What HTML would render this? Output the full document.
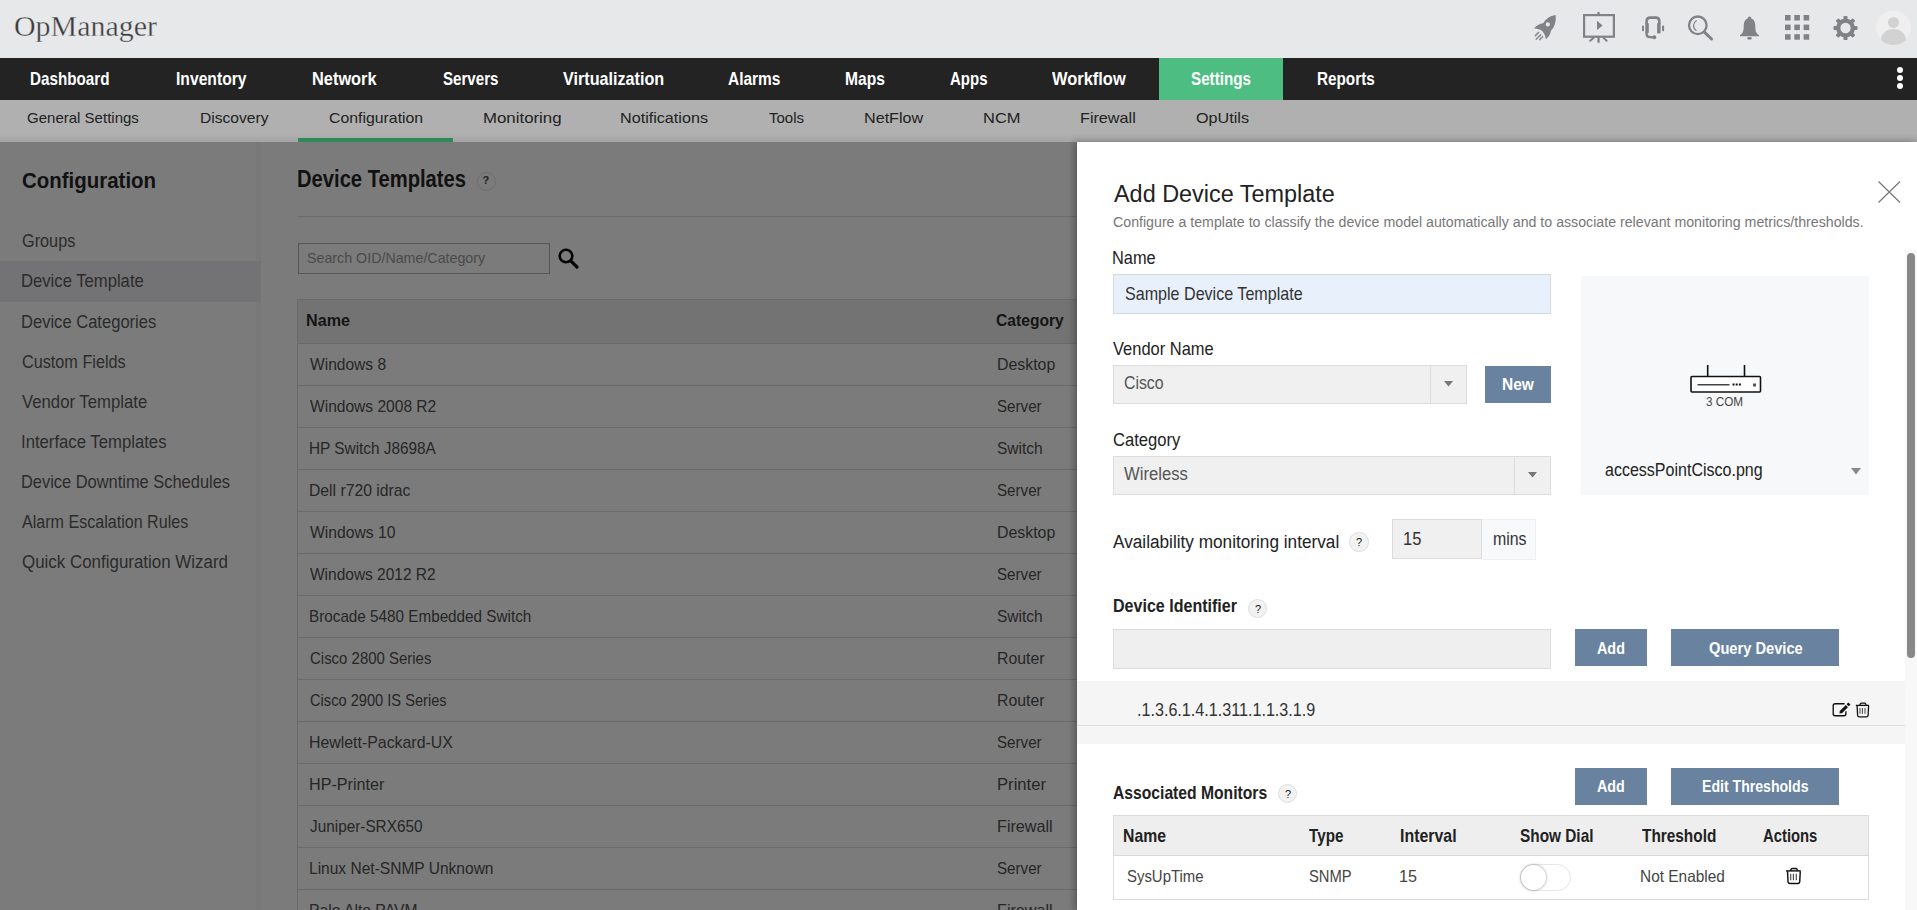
<!DOCTYPE html>
<html><head><meta charset="utf-8"><title>OpManager</title>
<style>
html,body{margin:0;padding:0}
body{width:1917px;height:910px;overflow:hidden;position:relative;background:#7b7b7b;font-family:"Liberation Sans",sans-serif}
.a{position:absolute;box-sizing:border-box}
.t{position:absolute;white-space:nowrap}
svg{position:absolute;overflow:visible}
</style></head><body>
<!-- header -->
<div class="a" style="left:0;top:0;width:1917px;height:58px;background:#e7e8ea"></div>
<div class="a" style="left:0;top:58px;width:1917px;height:42px;background:#232323"></div>
<div class="a" style="left:1159px;top:58px;width:124px;height:42px;background:#4dbd81"></div>
<div class="a" style="left:1896.5px;top:66.8px;width:6px;height:6px;border-radius:50%;background:#fff"></div>
<div class="a" style="left:1896.5px;top:74.9px;width:6px;height:6px;border-radius:50%;background:#fff"></div>
<div class="a" style="left:1896.5px;top:82.9px;width:6px;height:6px;border-radius:50%;background:#fff"></div>
<div class="a" style="left:0;top:100px;width:1917px;height:42px;background:linear-gradient(#b0b0b0 0,#b0b0b0 34px,#a4a4a4 42px)"></div>
<div class="a" style="left:298px;top:138px;width:155px;height:4px;background:#2f8a5a"></div>

<!-- header icons -->
<svg style="left:1528px;top:10px" width="34" height="34" viewBox="0 0 34 34">
  <g fill="#808285">
    <path d="M27.6 5.1 C22 5.8 17.8 9.2 15.2 13.2 C11.5 13.6 8.2 15.6 6.1 18.6 C9.5 18.6 12.6 19.6 14.6 21.4 C16.4 23.4 17.6 26.2 17.8 29.3 C20.6 27.3 22.6 24.2 23 20.6 C26.4 17.6 28.3 12.2 27.6 5.1 Z"/>
  </g>
  <circle cx="19.8" cy="14.4" r="2.1" fill="#e7e8ea"/>
  <g stroke="#808285" stroke-width="1.5" stroke-linecap="round" opacity="0.9">
    <path d="M7.4 25.6 L10.6 22.4 M8.2 29.3 L12.6 24.9 M11.8 29.6 L14.6 26.8"/>
  </g>
</svg>
<svg style="left:1583px;top:12px" width="33" height="32" viewBox="0 0 33 32">
  <rect x="1.1" y="3.1" width="29.8" height="21.6" fill="none" stroke="#808285" stroke-width="2.2"/>
  <g fill="#808285">
    <rect x="14.4" y="0" width="2.3" height="3"/>
    <rect x="14.4" y="25" width="2.3" height="5.7"/>
    <path d="M14 8.7 L19.6 13.4 L14 18.1 Z"/>
  </g>
  <g stroke="#808285" stroke-width="2" stroke-linecap="round"><path d="M10.4 25.9 L7.2 28.8 M20.6 25.9 L23.6 28.8"/></g>
</svg>
<svg style="left:1642px;top:16px" width="23" height="24" viewBox="0 0 23 24">
  <g fill="none" stroke="#808285" stroke-width="2.6">
    <path d="M4.6 8 L4.6 5.2 Q4.6 1.6 8.2 1.6 L13.8 1.6 Q17.3 1.6 17.3 5.2 L17.3 8"/>
    <path d="M4.6 16 L4.6 18 Q4.6 21 8 21.1 L12 21.3" stroke-width="2.4"/>
  </g>
  <g fill="#808285">
    <rect x="3.3" y="6.9" width="3.5" height="10.4" rx="1"/>
    <rect x="15.1" y="6.9" width="3.5" height="10.6" rx="1"/>
    <rect x="0" y="9.4" width="1.9" height="5.9" rx="0.8"/>
    <rect x="20" y="9.4" width="2.1" height="5.9" rx="0.8"/>
    <circle cx="12.3" cy="21.3" r="2"/>
  </g>
</svg>
<svg style="left:1688px;top:16px" width="26" height="26" viewBox="0 0 26 26">
  <g fill="none" stroke="#808285" stroke-linecap="round">
    <circle cx="9.8" cy="9.3" r="8.8" stroke-width="2.3"/>
    <path d="M16.6 16.4 L23.6 23" stroke-width="3"/>
    <path d="M8.4 4.8 C5 6.6 4.3 11.6 8.2 14.4" stroke-width="1.2"/>
  </g>
</svg>
<svg style="left:1739px;top:16px" width="21" height="25" viewBox="0 0 21 25">
  <g fill="#808285">
    <path d="M10.5 0.5 C11.8 0.5 12.3 1.5 12.3 2.6 C15.2 3.6 16.3 6.5 16.3 10 C16.3 15 17 17.5 20 19 L20 20.2 L1 20.2 L1 19 C4 17.5 4.7 15 4.7 10 C4.7 6.5 5.8 3.6 8.7 2.6 C8.7 1.5 9.2 0.5 10.5 0.5 Z"/>
    <ellipse cx="10.5" cy="22.3" rx="2.4" ry="1.4"/>
  </g>
</svg>
<svg style="left:1785px;top:15px" width="25" height="25" viewBox="0 0 25 25"><g fill="#808285"><rect x="0" y="0" width="5.6" height="5.5"/><rect x="9.3" y="0" width="5.6" height="5.5"/><rect x="18.6" y="0" width="5.6" height="5.5"/><rect x="0" y="9.6" width="5.6" height="5.5"/><rect x="9.3" y="9.6" width="5.6" height="5.5"/><rect x="18.6" y="9.6" width="5.6" height="5.5"/><rect x="0" y="19.2" width="5.6" height="5.5"/><rect x="9.3" y="19.2" width="5.6" height="5.5"/><rect x="18.6" y="19.2" width="5.6" height="5.5"/></g></svg>
<svg style="left:1833px;top:16px" width="25" height="24" viewBox="0 0 25 24"><g fill="#808285"><rect x="10.5" y="0" width="4" height="6" rx="0.8" transform="rotate(0 12.5 12)"/><rect x="10.5" y="0" width="4" height="6" rx="0.8" transform="rotate(45 12.5 12)"/><rect x="10.5" y="0" width="4" height="6" rx="0.8" transform="rotate(90 12.5 12)"/><rect x="10.5" y="0" width="4" height="6" rx="0.8" transform="rotate(135 12.5 12)"/><rect x="10.5" y="0" width="4" height="6" rx="0.8" transform="rotate(180 12.5 12)"/><rect x="10.5" y="0" width="4" height="6" rx="0.8" transform="rotate(225 12.5 12)"/><rect x="10.5" y="0" width="4" height="6" rx="0.8" transform="rotate(270 12.5 12)"/><rect x="10.5" y="0" width="4" height="6" rx="0.8" transform="rotate(315 12.5 12)"/><circle cx="12.5" cy="12" r="9.4"/></g><circle cx="12.5" cy="12" r="5.2" fill="#e7e8ea"/></svg>
<div class="a" style="left:1876px;top:10.5px;width:34.5px;height:34.5px;border-radius:50%;background:#efefef;overflow:hidden">
  <div class="a" style="left:11.5px;top:6px;width:11px;height:11px;border-radius:50%;background:#d2d2d2"></div>
  <div class="a" style="left:5px;top:18.5px;width:24.5px;height:22px;border-radius:50% 50% 0 0;background:#d2d2d2"></div>
</div>

<!-- sidebar -->
<div class="a" style="left:256px;top:142px;width:5px;height:768px;background:#787878"></div>
<div class="a" style="left:0;top:261px;width:261px;height:41px;background:#737375"></div>

<!-- main -->
<div class="a" style="left:297px;top:216px;width:780px;height:1px;background:#6c6c6c"></div>
<div class="a" style="left:477px;top:171.5px;width:19px;height:19px;border-radius:50%;border:1px solid #6e6e6e;background:#7b7b7b"></div>
<span class="t" style="left:482.5px;top:172px;font-size:11px;line-height:17px;font-weight:700;color:#222">?</span>
<div class="a" style="left:298px;top:243px;width:252px;height:31px;border:1px solid #555"></div>
<svg style="left:558px;top:248px" width="22" height="21" viewBox="0 0 22 21">
  <g fill="none" stroke="#000" stroke-linecap="round">
    <circle cx="8" cy="8" r="6.3" stroke-width="2.6"/>
    <path d="M12.8 12.8 L19 19" stroke-width="3.2"/>
  </g>
</svg>
<div class="a" style="left:297px;top:299px;width:780px;height:44px;background:#737373;border-top:1px solid #6a6a6a"></div>
<div class="a" style="left:297px;top:299px;width:1px;height:611px;background:#6a6a6a"></div>
<div id="rowlines"></div>
<div class="a" style="left:298px;top:343px;width:779px;height:1px;background:#6a6a6a"></div><div class="a" style="left:298px;top:385px;width:779px;height:1px;background:#6a6a6a"></div><div class="a" style="left:298px;top:427px;width:779px;height:1px;background:#6a6a6a"></div><div class="a" style="left:298px;top:469px;width:779px;height:1px;background:#6a6a6a"></div><div class="a" style="left:298px;top:511px;width:779px;height:1px;background:#6a6a6a"></div><div class="a" style="left:298px;top:553px;width:779px;height:1px;background:#6a6a6a"></div><div class="a" style="left:298px;top:595px;width:779px;height:1px;background:#6a6a6a"></div><div class="a" style="left:298px;top:637px;width:779px;height:1px;background:#6a6a6a"></div><div class="a" style="left:298px;top:679px;width:779px;height:1px;background:#6a6a6a"></div><div class="a" style="left:298px;top:721px;width:779px;height:1px;background:#6a6a6a"></div><div class="a" style="left:298px;top:763px;width:779px;height:1px;background:#6a6a6a"></div><div class="a" style="left:298px;top:805px;width:779px;height:1px;background:#6a6a6a"></div><div class="a" style="left:298px;top:847px;width:779px;height:1px;background:#6a6a6a"></div><div class="a" style="left:298px;top:889px;width:779px;height:1px;background:#6a6a6a"></div>

<!-- panel -->
<div class="a" style="left:1077px;top:142px;width:840px;height:768px;background:#fff;box-shadow:-3px 0 7px rgba(0,0,0,.28)"></div>
<div class="a" style="left:1905px;top:250px;width:12px;height:660px;background:#f8f8f8"></div>
<div class="a" style="left:1906.5px;top:252.5px;width:8.5px;height:405px;border-radius:5px;background:#888"></div>
<svg style="left:1878px;top:181px" width="23" height="22" viewBox="0 0 23 22">
  <g stroke="#777" stroke-width="1.2"><path d="M0.5 0.5 L22 21.5 M22 0.5 L0.5 21.5"/></g>
</svg>

<div class="a" style="left:1113px;top:274px;width:438px;height:40px;background:#e8f0fc;border:1px solid #d3d8df"></div>
<div class="a" style="left:1581px;top:276px;width:288px;height:219px;background:#f7f8fa"></div>
<!-- router -->
<svg style="left:1688px;top:363px" width="76" height="32" viewBox="0 0 76 32">
  <g fill="none" stroke="#111" stroke-width="1.6">
    <rect x="3" y="13.5" width="69.5" height="15.5" rx="1" fill="#fff"/>
    <path d="M19.7 2 L19.7 13.5 M56.5 2 L56.5 13.5"/>
  </g>
  <g fill="#111">
    <rect x="9.5" y="21" width="32" height="1.5" fill="#444"/>
    <rect x="44.5" y="20.5" width="2" height="2"/><rect x="47.7" y="20.5" width="2" height="2"/><rect x="50.9" y="20.5" width="2" height="2"/>
    <rect x="65" y="20.5" width="3" height="3" fill="#555"/>
  </g>
</svg>
<svg style="left:1851px;top:467.5px" width="10" height="7" viewBox="0 0 10 7"><path d="M0 0 L10 0 L5 6.5 Z" fill="#888"/></svg>

<div class="a" style="left:1113px;top:365px;width:354px;height:39px;background:#f0f0f0;border:1px solid #dcdcdc"></div>
<div class="a" style="left:1430px;top:365px;width:1px;height:38px;background:#dcdcdc"></div>
<svg style="left:1443.5px;top:380.5px" width="10" height="7" viewBox="0 0 10 7"><path d="M0 0 L9 0 L4.5 5.5 Z" fill="#777"/></svg>
<div class="a" style="left:1485px;top:366px;width:66px;height:37px;background:#6882a0"></div>

<div class="a" style="left:1113px;top:456px;width:438px;height:39px;background:#f0f0f0;border:1px solid #dcdcdc"></div>
<div class="a" style="left:1514px;top:457px;width:1px;height:37px;background:#dcdcdc"></div>
<svg style="left:1528px;top:471.5px" width="10" height="7" viewBox="0 0 10 7"><path d="M0 0 L9 0 L4.5 5.5 Z" fill="#777"/></svg>

<div class="a" style="left:1349px;top:532px;width:19.5px;height:19.5px;border-radius:50%;background:#f2f2f2;border:1px solid #dedede"></div>
<div class="a" style="left:1392px;top:519px;width:90px;height:40px;background:#f0f0f0;border:1px solid #dcdcdc"></div>
<div class="a" style="left:1482px;top:519px;width:54px;height:41px;background:#f8f9fa;border:1px solid #f0f0f0;border-left:0"></div>

<div class="a" style="left:1248px;top:598.5px;width:19px;height:19px;border-radius:50%;background:#f2f2f2;border:1px solid #dedede"></div>
<div class="a" style="left:1113px;top:629px;width:438px;height:40px;background:#efefef;border:1px solid #dcdcdc"></div>
<div class="a" style="left:1575px;top:629px;width:72px;height:37px;background:#6882a0"></div>
<div class="a" style="left:1671px;top:629px;width:168px;height:37px;background:#6882a0"></div>

<div class="a" style="left:1077px;top:681px;width:828px;height:63px;background:#f5f5f5"></div>
<div class="a" style="left:1077px;top:725px;width:828px;height:1px;background:#e0e0e0"></div>
<!-- edit icon -->
<svg style="left:1830px;top:700px" width="22" height="18" viewBox="0 0 22 18">
  <path d="M14.6 3.7 L5.2 3.7 Q3.2 3.7 3.2 5.7 L3.2 13.7 Q3.2 15.7 5.2 15.7 L13.9 15.7 Q15.9 15.7 15.9 13.7 L15.9 11.3" fill="none" stroke="#111" stroke-width="1.35"/>
  <path d="M10.6 12.4 L16.9 6.1" stroke="#111" stroke-width="3"/>
  <path d="M9.4 13.6 L9.9 11.2 L11.8 13.1 Z" fill="#111"/>
  <path d="M17.6 5.3 L19.4 3.5" stroke="#111" stroke-width="3"/>
</svg>
<svg style="left:1854px;top:701px" width="17" height="18" viewBox="0 0 17 18">
  <g fill="none" stroke="#111" stroke-width="1.3">
    <path d="M1.8 4.4 L15 4.4"/>
    <path d="M5.8 4.2 L6.5 2.6 Q6.8 2.2 7.5 2.2 L10.5 2.2 Q11.2 2.2 11.5 2.6 L12.2 4.2"/>
    <path d="M3.1 4.8 L3.6 14.3 Q3.8 15.8 5.3 15.8 L12.4 15.8 Q13.9 15.8 14.1 14.3 L14.6 4.8"/>
  </g>
  <g stroke="#444" stroke-width="1"><path d="M6 7 L6 12.8 M8.4 7 L8.4 12.8 M11 7 L11 12.8"/></g>
</svg>
<div class="a" style="left:1278px;top:783.5px;width:19px;height:19px;border-radius:50%;background:#f2f2f2;border:1px solid #dedede"></div>
<div class="a" style="left:1575px;top:768px;width:72px;height:37px;background:#6882a0"></div>
<div class="a" style="left:1671px;top:768px;width:168px;height:37px;background:#6882a0"></div>

<div class="a" style="left:1113px;top:815px;width:756px;height:85px;background:#fff;border:1px solid #dcdcdc"></div>
<div class="a" style="left:1114px;top:816px;width:754px;height:40px;background:#eeeeee;border-bottom:1px solid #d8d8d8"></div>
<div class="a" style="left:1520px;top:864px;width:50.5px;height:26.5px;border-radius:14px;background:#fff;border:1px solid #e6e6e6"></div>
<div class="a" style="left:1520.5px;top:864.5px;width:25px;height:25px;border-radius:50%;background:#fff;box-shadow:0 0 2px 1px rgba(0,0,0,.22)"></div>
<svg style="left:1784px;top:866px" width="19" height="20" viewBox="0 0 17 18">
  <g fill="none" stroke="#111" stroke-width="1.3">
    <path d="M1.8 4.4 L15 4.4"/>
    <path d="M5.8 4.2 L6.5 2.6 Q6.8 2.2 7.5 2.2 L10.5 2.2 Q11.2 2.2 11.5 2.6 L12.2 4.2"/>
    <path d="M3.1 4.8 L3.6 14.3 Q3.8 15.8 5.3 15.8 L12.4 15.8 Q13.9 15.8 14.1 14.3 L14.6 4.8"/>
  </g>
  <g stroke="#444" stroke-width="1"><path d="M6 7 L6 12.8 M8.4 7 L8.4 12.8 M11 7 L11 12.8"/></g>
</svg>

<span id="t0" class="t" style="left:14.40px;top:11.55px;font-size:29.48px;line-height:29px;letter-spacing:0.000px;font-weight:400;color:#3c3c3c;font-family:'Liberation Serif', serif;transform:scaleX(1.0156);transform-origin:0 0;-webkit-text-stroke:0.35px #e7e8ea;">OpManager</span>
<span id="t1" class="t" style="left:29.96px;top:68.90px;font-size:19.04px;line-height:19px;letter-spacing:0.000px;font-weight:700;color:#fff;font-family:'Liberation Sans', sans-serif;transform:scaleX(0.8002);transform-origin:0 0;">Dashboard</span>
<span id="t2" class="t" style="left:176.16px;top:68.90px;font-size:19.04px;line-height:19px;letter-spacing:0.000px;font-weight:700;color:#fff;font-family:'Liberation Sans', sans-serif;transform:scaleX(0.8237);transform-origin:0 0;">Inventory</span>
<span id="t3" class="t" style="left:312.06px;top:68.90px;font-size:19.04px;line-height:19px;letter-spacing:0.000px;font-weight:700;color:#fff;font-family:'Liberation Sans', sans-serif;transform:scaleX(0.8601);transform-origin:0 0;">Network</span>
<span id="t4" class="t" style="left:442.72px;top:68.90px;font-size:19.04px;line-height:19px;letter-spacing:0.000px;font-weight:700;color:#fff;font-family:'Liberation Sans', sans-serif;transform:scaleX(0.7943);transform-origin:0 0;">Servers</span>
<span id="t5" class="t" style="left:563.08px;top:68.90px;font-size:19.04px;line-height:19px;letter-spacing:0.000px;font-weight:700;color:#fff;font-family:'Liberation Sans', sans-serif;transform:scaleX(0.8496);transform-origin:0 0;">Virtualization</span>
<span id="t6" class="t" style="left:728.00px;top:68.90px;font-size:19.04px;line-height:19px;letter-spacing:0.000px;font-weight:700;color:#fff;font-family:'Liberation Sans', sans-serif;transform:scaleX(0.8125);transform-origin:0 0;">Alarms</span>
<span id="t7" class="t" style="left:845.08px;top:68.90px;font-size:19.04px;line-height:19px;letter-spacing:0.000px;font-weight:700;color:#fff;font-family:'Liberation Sans', sans-serif;transform:scaleX(0.8191);transform-origin:0 0;">Maps</span>
<span id="t8" class="t" style="left:950.00px;top:68.90px;font-size:19.04px;line-height:19px;letter-spacing:0.000px;font-weight:700;color:#fff;font-family:'Liberation Sans', sans-serif;transform:scaleX(0.7878);transform-origin:0 0;">Apps</span>
<span id="t9" class="t" style="left:1052.32px;top:68.90px;font-size:19.04px;line-height:19px;letter-spacing:0.000px;font-weight:700;color:#fff;font-family:'Liberation Sans', sans-serif;transform:scaleX(0.8640);transform-origin:0 0;">Workflow</span>
<span id="t10" class="t" style="left:1191.34px;top:68.90px;font-size:19.04px;line-height:19px;letter-spacing:0.000px;font-weight:700;color:#fff;font-family:'Liberation Sans', sans-serif;transform:scaleX(0.7988);transform-origin:0 0;">Settings</span>
<span id="t11" class="t" style="left:1316.71px;top:68.90px;font-size:19.04px;line-height:19px;letter-spacing:0.000px;font-weight:700;color:#fff;font-family:'Liberation Sans', sans-serif;transform:scaleX(0.8031);transform-origin:0 0;">Reports</span>
<span id="t12" class="t" style="left:27.21px;top:109.76px;font-size:15.41px;line-height:15px;letter-spacing:0.000px;font-weight:400;color:#222;font-family:'Liberation Sans', sans-serif;transform:scaleX(0.9746);transform-origin:0 0;">General Settings</span>
<span id="t13" class="t" style="left:199.59px;top:109.76px;font-size:15.41px;line-height:15px;letter-spacing:0.000px;font-weight:400;color:#222;font-family:'Liberation Sans', sans-serif;transform:scaleX(1.0121);transform-origin:0 0;">Discovery</span>
<span id="t14" class="t" style="left:328.60px;top:109.76px;font-size:15.41px;line-height:15px;letter-spacing:0.000px;font-weight:400;color:#222;font-family:'Liberation Sans', sans-serif;transform:scaleX(1.0275);transform-origin:0 0;">Configuration</span>
<span id="t15" class="t" style="left:482.95px;top:109.76px;font-size:15.41px;line-height:15px;letter-spacing:0.000px;font-weight:400;color:#222;font-family:'Liberation Sans', sans-serif;transform:scaleX(1.0917);transform-origin:0 0;">Monitoring</span>
<span id="t16" class="t" style="left:619.95px;top:109.76px;font-size:15.41px;line-height:15px;letter-spacing:0.000px;font-weight:400;color:#222;font-family:'Liberation Sans', sans-serif;transform:scaleX(1.0482);transform-origin:0 0;">Notifications</span>
<span id="t17" class="t" style="left:769.00px;top:109.76px;font-size:15.41px;line-height:15px;letter-spacing:0.000px;font-weight:400;color:#222;font-family:'Liberation Sans', sans-serif;transform:scaleX(0.9722);transform-origin:0 0;">Tools</span>
<span id="t18" class="t" style="left:863.78px;top:109.76px;font-size:15.41px;line-height:15px;letter-spacing:0.000px;font-weight:400;color:#222;font-family:'Liberation Sans', sans-serif;transform:scaleX(1.0475);transform-origin:0 0;">NetFlow</span>
<span id="t19" class="t" style="left:982.78px;top:109.76px;font-size:15.41px;line-height:15px;letter-spacing:0.000px;font-weight:400;color:#222;font-family:'Liberation Sans', sans-serif;transform:scaleX(1.0677);transform-origin:0 0;">NCM</span>
<span id="t20" class="t" style="left:1080.18px;top:109.76px;font-size:15.41px;line-height:15px;letter-spacing:0.000px;font-weight:400;color:#222;font-family:'Liberation Sans', sans-serif;transform:scaleX(1.0501);transform-origin:0 0;">Firewall</span>
<span id="t21" class="t" style="left:1195.97px;top:109.76px;font-size:15.41px;line-height:15px;letter-spacing:0.000px;font-weight:400;color:#222;font-family:'Liberation Sans', sans-serif;transform:scaleX(1.0501);transform-origin:0 0;">OpUtils</span>
<span id="t22" class="t" style="left:21.66px;top:169.24px;font-size:22.97px;line-height:23px;letter-spacing:0.000px;font-weight:700;color:#111;font-family:'Liberation Sans', sans-serif;transform:scaleX(0.8905);transform-origin:0 0;">Configuration</span>
<span id="t23" class="t" style="left:21.67px;top:232.20px;font-size:18.46px;line-height:18px;letter-spacing:0.000px;font-weight:400;color:#2b2b2b;font-family:'Liberation Sans', sans-serif;transform:scaleX(0.8817);transform-origin:0 0;">Groups</span>
<span id="t24" class="t" style="left:20.76px;top:272.36px;font-size:18.46px;line-height:18px;letter-spacing:0.000px;font-weight:400;color:#2b2b2b;font-family:'Liberation Sans', sans-serif;transform:scaleX(0.9030);transform-origin:0 0;">Device Template</span>
<span id="t25" class="t" style="left:20.77px;top:312.52px;font-size:18.46px;line-height:18px;letter-spacing:0.000px;font-weight:400;color:#2b2b2b;font-family:'Liberation Sans', sans-serif;transform:scaleX(0.8979);transform-origin:0 0;">Device Categories</span>
<span id="t26" class="t" style="left:21.67px;top:352.68px;font-size:18.46px;line-height:18px;letter-spacing:0.000px;font-weight:400;color:#2b2b2b;font-family:'Liberation Sans', sans-serif;transform:scaleX(0.8796);transform-origin:0 0;">Custom Fields</span>
<span id="t27" class="t" style="left:21.56px;top:392.84px;font-size:18.46px;line-height:18px;letter-spacing:0.000px;font-weight:400;color:#2b2b2b;font-family:'Liberation Sans', sans-serif;transform:scaleX(0.9072);transform-origin:0 0;">Vendor Template</span>
<span id="t28" class="t" style="left:20.74px;top:433.00px;font-size:18.46px;line-height:18px;letter-spacing:0.000px;font-weight:400;color:#2b2b2b;font-family:'Liberation Sans', sans-serif;transform:scaleX(0.9063);transform-origin:0 0;">Interface Templates</span>
<span id="t29" class="t" style="left:20.78px;top:473.16px;font-size:18.46px;line-height:18px;letter-spacing:0.000px;font-weight:400;color:#2b2b2b;font-family:'Liberation Sans', sans-serif;transform:scaleX(0.8906);transform-origin:0 0;">Device Downtime Schedules</span>
<span id="t30" class="t" style="left:21.55px;top:513.32px;font-size:18.46px;line-height:18px;letter-spacing:0.000px;font-weight:400;color:#2b2b2b;font-family:'Liberation Sans', sans-serif;transform:scaleX(0.8722);transform-origin:0 0;">Alarm Escalation Rules</span>
<span id="t31" class="t" style="left:21.65px;top:553.48px;font-size:18.46px;line-height:18px;letter-spacing:0.000px;font-weight:400;color:#2b2b2b;font-family:'Liberation Sans', sans-serif;transform:scaleX(0.9180);transform-origin:0 0;">Quick Configuration Wizard</span>
<span id="t32" class="t" style="left:297.17px;top:166.98px;font-size:24.27px;line-height:24px;letter-spacing:0.000px;font-weight:700;color:#111;font-family:'Liberation Sans', sans-serif;transform:scaleX(0.8317);transform-origin:0 0;">Device Templates</span>
<span id="t33" class="t" style="left:306.99px;top:251.31px;font-size:14.10px;line-height:14px;letter-spacing:0.000px;font-weight:400;color:#4a4a4a;font-family:'Liberation Sans', sans-serif;transform:scaleX(1.0108);transform-origin:0 0;">Search OID/Name/Category</span>
<span id="t34" class="t" style="left:306.23px;top:311.65px;font-size:16.86px;line-height:17px;letter-spacing:0.000px;font-weight:700;color:#151515;font-family:'Liberation Sans', sans-serif;transform:scaleX(0.9580);transform-origin:0 0;">Name</span>
<span id="t35" class="t" style="left:996.03px;top:311.65px;font-size:16.86px;line-height:17px;letter-spacing:0.000px;font-weight:700;color:#151515;font-family:'Liberation Sans', sans-serif;transform:scaleX(0.9273);transform-origin:0 0;">Category</span>
<span id="t36" class="t" style="left:310.39px;top:356.56px;font-size:15.70px;line-height:16px;letter-spacing:0.000px;font-weight:400;color:#262626;font-family:'Liberation Sans', sans-serif;transform:scaleX(0.9923);transform-origin:0 0;">Windows 8</span>
<span id="t37" class="t" style="left:997.18px;top:356.56px;font-size:15.70px;line-height:16px;letter-spacing:0.000px;font-weight:400;color:#262626;font-family:'Liberation Sans', sans-serif;transform:scaleX(1.0125);transform-origin:0 0;">Desktop</span>
<span id="t38" class="t" style="left:310.39px;top:398.56px;font-size:15.70px;line-height:16px;letter-spacing:0.000px;font-weight:400;color:#262626;font-family:'Liberation Sans', sans-serif;transform:scaleX(0.9916);transform-origin:0 0;">Windows 2008 R2</span>
<span id="t39" class="t" style="left:997.18px;top:398.56px;font-size:15.70px;line-height:16px;letter-spacing:0.000px;font-weight:400;color:#262626;font-family:'Liberation Sans', sans-serif;transform:scaleX(0.9655);transform-origin:0 0;">Server</span>
<span id="t40" class="t" style="left:309.42px;top:440.56px;font-size:15.70px;line-height:16px;letter-spacing:0.000px;font-weight:400;color:#262626;font-family:'Liberation Sans', sans-serif;transform:scaleX(0.9783);transform-origin:0 0;">HP Switch J8698A</span>
<span id="t41" class="t" style="left:997.19px;top:440.56px;font-size:15.70px;line-height:16px;letter-spacing:0.000px;font-weight:400;color:#262626;font-family:'Liberation Sans', sans-serif;transform:scaleX(0.9890);transform-origin:0 0;">Switch</span>
<span id="t42" class="t" style="left:309.40px;top:482.56px;font-size:15.70px;line-height:16px;letter-spacing:0.000px;font-weight:400;color:#262626;font-family:'Liberation Sans', sans-serif;transform:scaleX(1.0022);transform-origin:0 0;">Dell r720 idrac</span>
<span id="t43" class="t" style="left:997.18px;top:482.56px;font-size:15.70px;line-height:16px;letter-spacing:0.000px;font-weight:400;color:#262626;font-family:'Liberation Sans', sans-serif;transform:scaleX(0.9655);transform-origin:0 0;">Server</span>
<span id="t44" class="t" style="left:310.39px;top:524.56px;font-size:15.70px;line-height:16px;letter-spacing:0.000px;font-weight:400;color:#262626;font-family:'Liberation Sans', sans-serif;transform:scaleX(1.0002);transform-origin:0 0;">Windows 10</span>
<span id="t45" class="t" style="left:997.18px;top:524.56px;font-size:15.70px;line-height:16px;letter-spacing:0.000px;font-weight:400;color:#262626;font-family:'Liberation Sans', sans-serif;transform:scaleX(1.0125);transform-origin:0 0;">Desktop</span>
<span id="t46" class="t" style="left:310.39px;top:566.56px;font-size:15.70px;line-height:16px;letter-spacing:0.000px;font-weight:400;color:#262626;font-family:'Liberation Sans', sans-serif;transform:scaleX(0.9868);transform-origin:0 0;">Windows 2012 R2</span>
<span id="t47" class="t" style="left:997.18px;top:566.56px;font-size:15.70px;line-height:16px;letter-spacing:0.000px;font-weight:400;color:#262626;font-family:'Liberation Sans', sans-serif;transform:scaleX(0.9655);transform-origin:0 0;">Server</span>
<span id="t48" class="t" style="left:309.41px;top:608.56px;font-size:15.70px;line-height:16px;letter-spacing:0.000px;font-weight:400;color:#262626;font-family:'Liberation Sans', sans-serif;transform:scaleX(0.9727);transform-origin:0 0;">Brocade 5480 Embedded Switch</span>
<span id="t49" class="t" style="left:997.19px;top:608.56px;font-size:15.70px;line-height:16px;letter-spacing:0.000px;font-weight:400;color:#262626;font-family:'Liberation Sans', sans-serif;transform:scaleX(0.9890);transform-origin:0 0;">Switch</span>
<span id="t50" class="t" style="left:310.42px;top:650.56px;font-size:15.70px;line-height:16px;letter-spacing:0.000px;font-weight:400;color:#262626;font-family:'Liberation Sans', sans-serif;transform:scaleX(0.9535);transform-origin:0 0;">Cisco 2800 Series</span>
<span id="t51" class="t" style="left:997.19px;top:650.56px;font-size:15.70px;line-height:16px;letter-spacing:0.000px;font-weight:400;color:#262626;font-family:'Liberation Sans', sans-serif;transform:scaleX(1.0088);transform-origin:0 0;">Router</span>
<span id="t52" class="t" style="left:310.43px;top:692.56px;font-size:15.70px;line-height:16px;letter-spacing:0.000px;font-weight:400;color:#262626;font-family:'Liberation Sans', sans-serif;transform:scaleX(0.9328);transform-origin:0 0;">Cisco 2900 IS Series</span>
<span id="t53" class="t" style="left:997.19px;top:692.56px;font-size:15.70px;line-height:16px;letter-spacing:0.000px;font-weight:400;color:#262626;font-family:'Liberation Sans', sans-serif;transform:scaleX(1.0088);transform-origin:0 0;">Router</span>
<span id="t54" class="t" style="left:309.39px;top:734.56px;font-size:15.70px;line-height:16px;letter-spacing:0.000px;font-weight:400;color:#262626;font-family:'Liberation Sans', sans-serif;transform:scaleX(1.0121);transform-origin:0 0;">Hewlett-Packard-UX</span>
<span id="t55" class="t" style="left:997.18px;top:734.56px;font-size:15.70px;line-height:16px;letter-spacing:0.000px;font-weight:400;color:#262626;font-family:'Liberation Sans', sans-serif;transform:scaleX(0.9655);transform-origin:0 0;">Server</span>
<span id="t56" class="t" style="left:309.38px;top:776.56px;font-size:15.70px;line-height:16px;letter-spacing:0.000px;font-weight:400;color:#262626;font-family:'Liberation Sans', sans-serif;transform:scaleX(1.0289);transform-origin:0 0;">HP-Printer</span>
<span id="t57" class="t" style="left:997.12px;top:776.56px;font-size:15.70px;line-height:16px;letter-spacing:0.000px;font-weight:400;color:#262626;font-family:'Liberation Sans', sans-serif;transform:scaleX(1.0600);transform-origin:0 0;">Printer</span>
<span id="t58" class="t" style="left:310.41px;top:818.56px;font-size:15.70px;line-height:16px;letter-spacing:0.000px;font-weight:400;color:#262626;font-family:'Liberation Sans', sans-serif;transform:scaleX(0.9773);transform-origin:0 0;">Juniper-SRX650</span>
<span id="t59" class="t" style="left:997.17px;top:818.56px;font-size:15.70px;line-height:16px;letter-spacing:0.000px;font-weight:400;color:#262626;font-family:'Liberation Sans', sans-serif;transform:scaleX(1.0309);transform-origin:0 0;">Firewall</span>
<span id="t60" class="t" style="left:309.40px;top:860.56px;font-size:15.70px;line-height:16px;letter-spacing:0.000px;font-weight:400;color:#262626;font-family:'Liberation Sans', sans-serif;transform:scaleX(0.9904);transform-origin:0 0;">Linux Net-SNMP Unknown</span>
<span id="t61" class="t" style="left:997.18px;top:860.56px;font-size:15.70px;line-height:16px;letter-spacing:0.000px;font-weight:400;color:#262626;font-family:'Liberation Sans', sans-serif;transform:scaleX(0.9655);transform-origin:0 0;">Server</span>
<span id="t62" class="t" style="left:309.39px;top:902.56px;font-size:15.70px;line-height:16px;letter-spacing:0.000px;font-weight:400;color:#262626;font-family:'Liberation Sans', sans-serif;transform:scaleX(1.0010);transform-origin:0 0;">Palo Alto PAVM</span>
<span id="t63" class="t" style="left:997.17px;top:902.56px;font-size:15.70px;line-height:16px;letter-spacing:0.000px;font-weight:400;color:#262626;font-family:'Liberation Sans', sans-serif;transform:scaleX(1.0309);transform-origin:0 0;">Firewall</span>
<span id="t64" class="t" style="left:1113.98px;top:181.83px;font-size:24.42px;line-height:24px;letter-spacing:0.000px;font-weight:400;color:#222;font-family:'Liberation Sans', sans-serif;transform:scaleX(0.9596);transform-origin:0 0;">Add Device Template</span>
<span id="t65" class="t" style="left:1113.01px;top:214.91px;font-size:14.39px;line-height:14px;letter-spacing:0.000px;font-weight:400;color:#777;font-family:'Liberation Sans', sans-serif;transform:scaleX(0.9868);transform-origin:0 0;">Configure a template to classify the device model automatically and to associate relevant monitoring metrics/thresholds.</span>
<span id="t66" class="t" style="left:1112.04px;top:248.75px;font-size:18.02px;line-height:18px;letter-spacing:0.000px;font-weight:400;color:#222;font-family:'Liberation Sans', sans-serif;transform:scaleX(0.9086);transform-origin:0 0;">Name</span>
<span id="t67" class="t" style="left:1124.68px;top:284.25px;font-size:18.60px;line-height:19px;letter-spacing:0.000px;font-weight:400;color:#333;font-family:'Liberation Sans', sans-serif;transform:scaleX(0.8652);transform-origin:0 0;">Sample Device Template</span>
<span id="t68" class="t" style="left:1113.00px;top:339.70px;font-size:18.17px;line-height:18px;letter-spacing:0.000px;font-weight:400;color:#222;font-family:'Liberation Sans', sans-serif;transform:scaleX(0.9072);transform-origin:0 0;">Vendor Name</span>
<span id="t69" class="t" style="left:1124.30px;top:373.25px;font-size:18.90px;line-height:19px;letter-spacing:0.000px;font-weight:400;color:#555;font-family:'Liberation Sans', sans-serif;transform:scaleX(0.8374);transform-origin:0 0;">Cisco</span>
<span id="t70" class="t" style="left:1501.63px;top:375.71px;font-size:16.72px;line-height:17px;letter-spacing:0.000px;font-weight:700;color:#fff;font-family:'Liberation Sans', sans-serif;transform:scaleX(0.9267);transform-origin:0 0;">New</span>
<span id="t71" class="t" style="left:1113.00px;top:430.60px;font-size:18.17px;line-height:18px;letter-spacing:0.000px;font-weight:400;color:#222;font-family:'Liberation Sans', sans-serif;transform:scaleX(0.9150);transform-origin:0 0;">Category</span>
<span id="t72" class="t" style="left:1124.15px;top:464.15px;font-size:18.90px;line-height:19px;letter-spacing:0.000px;font-weight:400;color:#555;font-family:'Liberation Sans', sans-serif;transform:scaleX(0.8823);transform-origin:0 0;">Wireless</span>
<span id="t73" class="t" style="left:1706.00px;top:395.62px;font-size:12.06px;line-height:12px;letter-spacing:0.000px;font-weight:400;color:#444;font-family:'Liberation Sans', sans-serif;transform:scaleX(0.9713);transform-origin:0 0;">3 COM</span>
<span id="t74" class="t" style="left:1605.07px;top:459.65px;font-size:18.90px;line-height:19px;letter-spacing:0.000px;font-weight:400;color:#222;font-family:'Liberation Sans', sans-serif;transform:scaleX(0.8481);transform-origin:0 0;">accessPointCisco.png</span>
<span id="t75" class="t" style="left:1112.79px;top:532.80px;font-size:18.46px;line-height:18px;letter-spacing:0.000px;font-weight:400;color:#222;font-family:'Liberation Sans', sans-serif;transform:scaleX(0.9327);transform-origin:0 0;">Availability monitoring interval</span>
<span id="t76" class="t" style="left:1403.19px;top:531.05px;font-size:17.44px;line-height:17px;letter-spacing:0.000px;font-weight:400;color:#333;font-family:'Liberation Sans', sans-serif;transform:scaleX(0.9462);transform-origin:0 0;">15</span>
<span id="t77" class="t" style="left:1492.64px;top:531.05px;font-size:17.44px;line-height:17px;letter-spacing:0.000px;font-weight:400;color:#333;font-family:'Liberation Sans', sans-serif;transform:scaleX(0.9114);transform-origin:0 0;">mins</span>
<span id="t78" class="t" style="left:1112.86px;top:598.45px;font-size:17.44px;line-height:17px;letter-spacing:0.000px;font-weight:700;color:#222;font-family:'Liberation Sans', sans-serif;transform:scaleX(0.9201);transform-origin:0 0;">Device Identifier</span>
<span id="t79" class="t" style="left:1596.77px;top:640.31px;font-size:16.42px;line-height:16px;letter-spacing:0.000px;font-weight:700;color:#fff;font-family:'Liberation Sans', sans-serif;transform:scaleX(0.8750);transform-origin:0 0;">Add</span>
<span id="t80" class="t" style="left:1709.00px;top:640.31px;font-size:16.42px;line-height:16px;letter-spacing:0.000px;font-weight:700;color:#fff;font-family:'Liberation Sans', sans-serif;transform:scaleX(0.8934);transform-origin:0 0;">Query Device</span>
<span id="t81" class="t" style="left:1136.76px;top:699.95px;font-size:18.90px;line-height:19px;letter-spacing:0.000px;font-weight:400;color:#333;font-family:'Liberation Sans', sans-serif;transform:scaleX(0.8542);transform-origin:0 0;">.1.3.6.1.4.1.311.1.1.3.1.9</span>
<span id="t82" class="t" style="left:1113.32px;top:783.80px;font-size:17.88px;line-height:18px;letter-spacing:0.000px;font-weight:700;color:#222;font-family:'Liberation Sans', sans-serif;transform:scaleX(0.8777);transform-origin:0 0;">Associated Monitors</span>
<span id="t83" class="t" style="left:1597.05px;top:778.11px;font-size:16.72px;line-height:17px;letter-spacing:0.000px;font-weight:700;color:#fff;font-family:'Liberation Sans', sans-serif;transform:scaleX(0.8536);transform-origin:0 0;">Add</span>
<span id="t84" class="t" style="left:1702.08px;top:778.11px;font-size:16.72px;line-height:17px;letter-spacing:0.000px;font-weight:700;color:#fff;font-family:'Liberation Sans', sans-serif;transform:scaleX(0.8437);transform-origin:0 0;">Edit Thresholds</span>
<span id="t85" class="t" style="left:1123.10px;top:827.20px;font-size:18.17px;line-height:18px;letter-spacing:0.000px;font-weight:700;color:#222;font-family:'Liberation Sans', sans-serif;transform:scaleX(0.8680);transform-origin:0 0;">Name</span>
<span id="t86" class="t" style="left:1309.07px;top:827.20px;font-size:18.17px;line-height:18px;letter-spacing:0.000px;font-weight:700;color:#222;font-family:'Liberation Sans', sans-serif;transform:scaleX(0.8383);transform-origin:0 0;">Type</span>
<span id="t87" class="t" style="left:1399.87px;top:827.20px;font-size:18.17px;line-height:18px;letter-spacing:0.000px;font-weight:700;color:#222;font-family:'Liberation Sans', sans-serif;transform:scaleX(0.8765);transform-origin:0 0;">Interval</span>
<span id="t88" class="t" style="left:1520.15px;top:827.20px;font-size:18.17px;line-height:18px;letter-spacing:0.000px;font-weight:700;color:#222;font-family:'Liberation Sans', sans-serif;transform:scaleX(0.8466);transform-origin:0 0;">Show Dial</span>
<span id="t89" class="t" style="left:1641.92px;top:827.20px;font-size:18.17px;line-height:18px;letter-spacing:0.000px;font-weight:700;color:#222;font-family:'Liberation Sans', sans-serif;transform:scaleX(0.8467);transform-origin:0 0;">Threshold</span>
<span id="t90" class="t" style="left:1762.53px;top:827.20px;font-size:18.17px;line-height:18px;letter-spacing:0.000px;font-weight:700;color:#222;font-family:'Liberation Sans', sans-serif;transform:scaleX(0.8164);transform-origin:0 0;">Actions</span>
<span id="t91" class="t" style="left:1126.83px;top:867.81px;font-size:16.72px;line-height:17px;letter-spacing:0.000px;font-weight:400;color:#444;font-family:'Liberation Sans', sans-serif;transform:scaleX(0.8929);transform-origin:0 0;">SysUpTime</span>
<span id="t92" class="t" style="left:1309.22px;top:867.81px;font-size:16.72px;line-height:17px;letter-spacing:0.000px;font-weight:400;color:#444;font-family:'Liberation Sans', sans-serif;transform:scaleX(0.8835);transform-origin:0 0;">SNMP</span>
<span id="t93" class="t" style="left:1398.84px;top:867.81px;font-size:16.72px;line-height:17px;letter-spacing:0.000px;font-weight:400;color:#444;font-family:'Liberation Sans', sans-serif;transform:scaleX(0.9685);transform-origin:0 0;">15</span>
<span id="t94" class="t" style="left:1640.05px;top:867.81px;font-size:16.72px;line-height:17px;letter-spacing:0.000px;font-weight:400;color:#444;font-family:'Liberation Sans', sans-serif;transform:scaleX(0.9232);transform-origin:0 0;">Not Enabled</span>
<span class="t" style="left:1356px;top:536px;font-size:11px;line-height:12px;font-weight:400;color:#222">?</span><span class="t" style="left:1255px;top:602.5px;font-size:11px;line-height:12px;font-weight:400;color:#222">?</span><span class="t" style="left:1285px;top:787.5px;font-size:11px;line-height:12px;font-weight:400;color:#222">?</span>
</body></html>
